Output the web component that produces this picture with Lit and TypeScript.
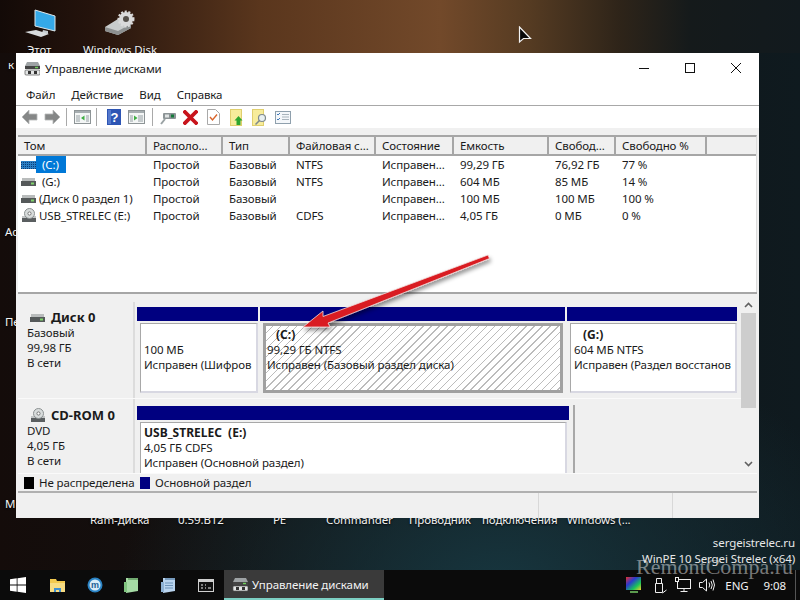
import { LitElement, html, css, svg } from "lit";
import { customElement } from "lit/decorators.js";

const hdd = () => html`<svg class="ico-sm" viewBox="0 0 15 10"><rect x="1" y="1" width="13" height="3" fill="#b9bcbc"/><rect x="0" y="4" width="15" height="5" fill="#55595a"/><rect x="10" y="5.5" width="3" height="2" fill="#7fd36a"/></svg>`;
const hddC = () => html`<svg class="ico-sm" viewBox="0 0 15 10"><defs><pattern id="hz" width="2" height="2" patternUnits="userSpaceOnUse"><rect width="2" height="2" fill="#2c7fc4"/><rect width="1" height="1" fill="#0a3c78"/></pattern></defs><rect x="0" y="1" width="15" height="8" fill="url(#hz)"/></svg>`;
const cd = () => html`<svg class="ico-sm tall" viewBox="0 0 15 15"><rect x="1" y="9" width="14" height="5" fill="#5a5e60"/><rect x="1" y="8" width="14" height="2" fill="#c2c5c6"/><circle cx="8.5" cy="5.5" r="5" fill="#d8dcdc" stroke="#8b9091" stroke-width="1"/><circle cx="8.5" cy="5.5" r="1.6" fill="#fff" stroke="#777"/></svg>`;
const diskTitle = (w = 16) => html`<svg width=${w} height=${w} viewBox="0 0 16 16"><path d="M3 2h11l2 4H1z" fill="#9ea3a5"/><rect x="1" y="6" width="15" height="3" fill="#444"/><rect x="11" y="6.8" width="3" height="1.4" fill="#6fd05c"/><rect x="1" y="10" width="15" height="5" rx="1" fill="#e4e6e6" stroke="#555" stroke-width=".7"/><rect x="4" y="11" width="3" height="3" fill="#333"/><rect x="10" y="11" width="3" height="3" fill="#333"/></svg>`;

const windowFrame = (inner: unknown) => svg`<rect x=".5" y=".5" width="16" height="13" fill="#f4f6f6" stroke="#8d9496"/><rect x="1" y="1" width="15" height="2" fill="#a6adb0"/>${inner}`;

const toolbar: Record<string, unknown> = {
  back: html`<svg width="17" height="16" viewBox="0 0 17 16"><path d="M1 8l7-7V5h8v6H8v4z" fill="#858787" stroke="#b5b7b7" stroke-width=".8"/></svg>`,
  fwd: html`<svg width="17" height="16" viewBox="0 0 17 16"><path d="M16 8L9 1V5H1v6h8v4z" fill="#858787" stroke="#b5b7b7" stroke-width=".8"/></svg>`,
  tree: html`<svg width="17" height="14" viewBox="0 0 17 14">${windowFrame(svg`<path d="M2 5h4v7H2zM12 5h3v7h-3z" fill="#c5cbcd"/><path d="M10.500 5.500v5L7 8z" fill="#3fae44"/>`)}</svg>`,
  help: html`<svg width="14" height="16" viewBox="0 0 14 16"><rect width="14" height="16" fill="#2d55b4"/><rect x="1" y="1" width="3" height="14" fill="#5478cc"/><text x="7.500" y="13" font-size="13" font-weight="700" fill="#fff" text-anchor="middle" font-family="Liberation Sans">?</text></svg>`,
  pane: html`<svg width="17" height="14" viewBox="0 0 17 14">${windowFrame(svg`<path d="M2 5h3v7H2zM10 5h5v7h-5z" fill="#c5cbcd"/><path d="M6 5.500v5L9.500 8z" fill="#3fae44"/>`)}</svg>`,
  connect: html`<svg width="16" height="15" viewBox="0 0 16 15"><rect x="3" y="3" width="13" height="6" rx="1" fill="#8c9496"/><rect x="11" y="4.500" width="3" height="3" fill="#147a3a"/><rect x="5" y="4.500" width="4" height="3" fill="#dfe3e3"/><path d="M5 9L1 14" stroke="#9aa2a4" stroke-width="2"/></svg>`,
  del: html`<svg width="15" height="15" viewBox="0 0 15 15"><path d="M2 2l11 11M13 2L2 13" stroke="#c8141c" stroke-width="3.800" stroke-linecap="square"/></svg>`,
  check: html`<svg width="13" height="16" viewBox="0 0 13 16"><path d="M.5.500h8l4 4v11H.5z" fill="#fff" stroke="#a9a9a9"/><path d="M3 8l2.500 3L10 5.500" fill="none" stroke="#d9652b" stroke-width="1.400"/></svg>`,
  up: html`<svg width="14" height="17" viewBox="0 0 14 17"><rect x=".5" y=".5" width="11" height="16" fill="#f7ec9b" stroke="#e0cf6e"/><path d="M8.500 7l4 4.500H10.500V16h-4v-4.500h-2z" fill="#2ea52e"/></svg>`,
  find: html`<svg width="15" height="17" viewBox="0 0 15 17"><rect x=".5" y=".5" width="11" height="16" fill="#f7ec9b" stroke="#e0cf6e"/><circle cx="10" cy="9" r="3.500" fill="#e8f0f2" stroke="#7f8a8c" stroke-width="1.200"/><path d="M7.500 11.500L3.500 15.500" stroke="#7f8a8c" stroke-width="1.600"/></svg>`,
  list: html`<svg width="16" height="13" viewBox="0 0 16 13"><rect x=".5" y=".5" width="15" height="12" fill="#f4f7fa" stroke="#8fa0ad"/><path d="M2 3l1 1 2-2M2 8l1 1 2-2" fill="none" stroke="#3f78b8"/><path d="M7 3.500h7M7 6h7M7 8.500h7" stroke="#a9b4bc"/></svg>`,
};

const rows = [
  { ic: hddC, name: "(C:)", sel: true, rest: ["Простой", "Базовый", "NTFS", "Исправен...", "99,29 ГБ", "76,92 ГБ", "77 %"] },
  { ic: hdd, name: "(G:)", wide: true, rest: ["Простой", "Базовый", "NTFS", "Исправен...", "604 МБ", "85 МБ", "14 %"] },
  { ic: hdd, name: "(Диск 0 раздел 1)", rest: ["Простой", "Базовый", "", "Исправен...", "100 МБ", "100 МБ", "100 %"] },
  { ic: cd, name: "USB_STRELEC (E:)", rest: ["Простой", "Базовый", "CDFS", "Исправен...", "4,05 ГБ", "0 МБ", "0 %"] },
];

const heads = ["Том", "Располо...", "Тип", "Файловая с...", "Состояние", "Емкость", "Свобод...", "Свободно %", ""];

const deskLabels = [
  { t: "Этот", x: 27, y: 42 }, { t: "Windows Disk", x: 83, y: 42 }, { t: "к", x: 8, y: 57 },
  { t: "Ac", x: 5, y: 224 }, { t: "Пе", x: 5, y: 314 }, { t: "М", x: 5, y: 496 },
  { t: "Ram-диска", x: 90, y: 512 }, { t: "0.59.B12", x: 178, y: 512 }, { t: "PE", x: 273, y: 512 },
  { t: "Commander", x: 326, y: 512 }, { t: "Проводник", x: 409, y: 512 }, { t: "подключения", x: 482, y: 512 }, { t: "Windows (...", x: 567, y: 512 },
];

@customElement("app-root")
export class AppRoot extends LitElement {
  static styles = css`
    :host { display: block; width: 800px; height: 600px; position: relative; overflow: hidden;
      font: 11.5px/15px "Noto Sans", "Open Sans", sans-serif; letter-spacing: -0.1px; color: #1a1a1a;
      background:
        linear-gradient(90deg, #130a07 0, #24130c 90px, #5a361d 260px, #72492a 440px, #553b22 530px, #2e2419 620px, #151a1b 690px, #121a1e 800px) top / 100% 53px no-repeat,
        radial-gradient(ellipse 380px 260px at 500px 590px, #17363f, transparent),
        linear-gradient(90deg, #140c0a, #0f1a1f); }
    .dlabel { position: absolute; color: #f2f2f2; white-space: nowrap; text-shadow: 0 1px 2px #000; }
    .dicon { position: absolute; }
    .cursor { position: absolute; left: 518px; top: 26px; }
    .win { position: absolute; left: 16px; top: 53px; width: 743px; height: 465px; background: #f0f0f0; display: flex; flex-direction: column; }
    .title { height: 30px; background: #fff; display: flex; align-items: center; padding-left: 8px; gap: 5px; flex: none; }
    .title span { flex: 1; }
    .ctl { display: flex; align-items: center; }
    .ctl svg { display: block; width: 46px; height: 12px; }
    .menu { height: 22px; background: #fff; display: flex; align-items: center; gap: 16px; padding-left: 10px; border-bottom: 1px solid #a8a8a8; flex: none; }
    .tools { height: 22px; background: #fff; display: flex; align-items: center; padding-left: 2px; flex: none; }
    .tb { width: 23px; height: 22px; display: flex; align-items: center; justify-content: center; flex: none; }
    .tb svg { display: block; }
    .sep { width: 1px; height: 18px; background: #a9a9a9; flex: none; }
    .s1 { margin: 0 4px 0 2px; }
    .s2 { margin: 0 5px 0 2px; }
    .s3 { margin: 0 3px 0 4px; }
    .strip { height: 7px; flex: none; }
    .frame { margin: 0 2px; flex: none; display: flex; flex-direction: column; }
    .list { height: 155px; background: #fff; border-top: 2px solid #a6a6a6; border-right: 1px solid #ddd; flex: none; }
    .grid { display: grid; grid-template-columns: 129px 76px 67px 86px 78px 95px 67px 91px 1fr; }
    .head { height: 17px; background: #f0f0f0; border-bottom: 2px solid #a6a6a6; }
    .hc { padding-left: 6px; border-right: 2px solid #a6a6a6; line-height: 18px; white-space: nowrap; overflow: hidden; }
    .hc:last-child { border-right: 0; }
    .row { height: 17px; line-height: 17px; }
    .c { padding-left: 6px; white-space: nowrap; overflow: hidden; }
    .c0 { padding-left: 3px; display: flex; align-items: center; }
    .ico-sm { width: 15px; height: 10px; flex: none; margin-right: 3px; display: block; }
    .ico-sm.tall { height: 15px; }
    .sel { background: #0078d7; color: #fff; padding: 0 7px 0 6px; height: 17px; margin-left: -3px; }
    .wide { padding-left: 3px; }
    .split { height: 2px; border-top: 2px solid #a6a6a6; background: #f0f0f0; flex: none; }
    .pane { height: 177px; display: flex; overflow: hidden; flex: none; }
    .vols { width: 723px; padding-top: 6px; flex: none; overflow: hidden; }
    .sb { width: 15px; display: flex; flex-direction: column; align-items: center; justify-content: space-between; position: relative; flex: none; height: 177px; }
    .thumb { position: absolute; left: 0; top: 17px; width: 15px; height: 95px; background: #cdcdcd; }
    .sb svg { display: block; }
    .arrow-u { margin-top: 6px; }
    .arrow-d { margin-bottom: 6px; }
    .disk { display: flex; border-bottom: 1px solid #fafafa; }
    .d0 { height: 96px; }
    .d1 { height: 80px; }
    .info { width: 117px; border-right: 2px solid #dcdcdc; padding: 8px 0 0 9px; box-sizing: border-box; flex: none; }
    .d1 .info { padding-top: 9px; }
    .info-h { display: flex; align-items: center; font-weight: 700; font-size: 13px; letter-spacing: 0; }
    .info-h .ico-sm { margin: 0 6px 0 3px; }
    .parts { display: flex; gap: 2px; padding: 5px 0 0 2px; flex: 1; align-items: flex-start; }
    .part { display: flex; flex-direction: column; flex: none; }
    .p1 { width: 121px; }
    .p2 { width: 305px; }
    .p3 { width: 170px; }
    .p4 { width: 432px; margin-top: 2px; }
    .bar { height: 14px; background: #000080; flex: none; }
    .box { margin: 2px 0 0 3px; height: 70px; box-sizing: border-box; background: #fff; border: 1px solid #a8a8a8; border-right: 2px solid #d8d8e2; border-bottom: 2px solid #d8d8e2; padding: 3px 0 0 3px; white-space: nowrap; overflow: hidden; }
    .p2 .box { margin-right: 2px; border: 3px solid #a0a0a0; padding: 1px 0 0 1px;
      background: repeating-linear-gradient(135deg, #fff 0 4.6px, #bcbcbc 4.6px 5.6px); }
    .p4 .box { height: 60px; padding-top: 2px; border-bottom: 0; margin-right: 2px; }
    .b { font-weight: 700; font-size: 12px; letter-spacing: 0; }
    .ind { padding-left: 9px; }
    .vline { width: 2px; height: 70px; background: #a8a8a8; margin: 1px 0 0 2px; flex: none; }
    .legend { height: 17px; margin: 0 2px; border-top: 1px solid #fafafa; border-bottom: 2px solid #b0b0b0; display: flex; align-items: center; padding-left: 6px; flex: none; }
    .sw { width: 10px; height: 12px; flex: none; margin-right: 5px; }
    .k { background: #000; }
    .n { background: #000080; }
    .lg { margin-right: 6px; width: 95px; white-space: nowrap; }
    .status { flex: 1; display: flex; }
    .st { border-right: 1px solid #d8d8d8; }
    .st1 { width: 522px; }
    .st2 { width: 133px; }
    .arrowbox { position: absolute; left: 0; top: 0; pointer-events: none; }
    .bar-task { position: absolute; left: 0; right: 0; bottom: 0; height: 30px; background: #0b0b0b; display: flex; align-items: center; color: #f2f2f2; }
    .ti { width: 37px; display: flex; justify-content: center; flex: none; }
    .ti svg { display: block; }
    .start { width: 39px; padding-right: 3px; box-sizing: border-box; }
    .active { margin-left: 0; width: 160px; height: 30px; box-sizing: border-box; background: #3a3a3a; border-bottom: 2px solid #7ccfc3; display: flex; align-items: center; gap: 4px; padding-left: 8px; flex: none; }
    .tray { margin-left: auto; display: flex; align-items: center; }
    .tray svg { display: block; }
    .t1 { margin-right: 12px; }
    .t2 { margin-right: 8px; }
    .t3 { margin-right: 8px; }
    .t4 { margin-right: 10px; }
    .eng { margin-right: 15px; }
    .clock { margin-right: 9px; }
    .endline { width: 1px; height: 30px; background: #555; margin-right: 4px; }
    .brand { position: absolute; right: 5px; top: 535px; text-align: right; color: #e8e8e8; line-height: 16px; }
    .mark { position: absolute; left: 636px; top: 553px; font: 22px/28px "Liberation Serif", serif; letter-spacing: 0; color: rgba(255,255,255,.45); white-space: nowrap; }
  `;

  render() {
    return html`
      ${deskLabels.map((l) => html`<div class="dlabel" style="left:${l.x}px;top:${l.y}px">${l.t}</div>`)}
      <svg class="dicon" style="left:24px;top:8px" width="32" height="30" viewBox="0 0 32 30"><path d="M11 2l20 6v15l-20-5z" fill="#35a9e8" stroke="#dfe7ea"/><path d="M19 22l5 1v3l-6-1z" fill="#c7cdd0"/><path d="M1 24l11-2 13 4-8 3z" fill="#d8dcde"/></svg>
      <svg class="dicon" style="left:103px;top:10px" width="34" height="26" viewBox="0 0 34 26"><path d="M2 17l13-8 13 5v4l-13 7-13-4z" fill="#c9cccc"/><path d="M2 17l13 4 13-7v4l-13 7-13-4z" fill="#8d9090"/><circle cx="23" cy="9" r="7" fill="#dadada" stroke="#dadada" stroke-width="3" stroke-dasharray="2 1.500"/><circle cx="23" cy="9" r="3" fill="#55504a"/></svg>
      <svg class="cursor" width="15" height="19" viewBox="0 0 15 19"><path d="M1.500 1v15l4-3.500h7z" fill="#0a0a0a" stroke="#f4f4f4" stroke-width="1.200"/></svg>

      <div class="brand">sergeistrelec.ru<br />WinPE 10 Sergei Strelec (x64)</div>

      <div class="bar-task">
        <div class="ti start"><svg width="16" height="16" viewBox="0 0 16 16" fill="#fff"><path d="M0 2.200l6.700-.9v6.300H0zM7.500 1.200L16 0v7.600H7.500zM0 8.400h6.700v6.300L0 13.800zM7.500 8.400H16V16l-8.500-1.200z"/></svg></div>
        <div class="ti"><svg width="17" height="15" viewBox="0 0 17 15"><path d="M1 1h6l1 2h8v11H1z" fill="#f2c94f"/><rect x="1" y="5" width="15" height="9" fill="#f7dc83"/><path d="M5 14v-4h7v4h-2v-2H7v2z" fill="#3f8fd0"/></svg></div>
        <div class="ti"><svg width="16" height="16" viewBox="0 0 16 16"><circle cx="8" cy="8" r="7.500" fill="#2a83c4"/><circle cx="8" cy="8" r="5.500" fill="#d8ecf8"/><text x="8" y="11" font-size="9" font-weight="700" fill="#1b5f96" text-anchor="middle" font-family="Liberation Sans">m</text></svg></div>
        <div class="ti"><svg width="15" height="16" viewBox="0 0 15 16"><path d="M2 1h12v13l-12 2z" fill="#a5dba5"/><path d="M5 1v2M7 1v2M9 1v2M11 1v2M13 1v2" stroke="#3d7a3d"/><path d="M0 5h3v10H0z" fill="#7fc47f"/></svg></div>
        <div class="ti"><svg width="15" height="16" viewBox="0 0 15 16"><path d="M2 1h12v13l-12 2z" fill="#b9d4ee"/><path d="M5 1v2M7 1v2M9 1v2M11 1v2M13 1v2" stroke="#36658f"/><path d="M4 6h8M4 8.500h8M4 11h8" stroke="#6d93b8"/><path d="M0 5h3v10H0z" fill="#8eb2d4"/></svg></div>
        <div class="ti"><svg width="16" height="13" viewBox="0 0 16 13"><rect x=".5" y=".5" width="15" height="12" fill="#111" stroke="#cfcfcf"/><rect x="1" y="1" width="14" height="2" fill="#cfcfcf"/><path d="M3 6h2M3 9h2M7 6h1M7 9h1M10 9h3" stroke="#eee"/></svg></div>
        <div class="active">${diskTitle()}<span>Управление дисками</span></div>
        <div class="tray">
          <svg class="t1" width="16" height="16" viewBox="0 0 16 16"><defs><linearGradient id="rb" x1="0" x2="1" y1="0" y2="1"><stop offset="0" stop-color="#e8322a"/><stop offset=".35" stop-color="#2b38d0"/><stop offset=".7" stop-color="#18c45a"/><stop offset="1" stop-color="#f2d22a"/></linearGradient></defs><rect width="15" height="13" fill="url(#rb)"/><path d="M4 15h8" stroke="#7c6" stroke-width="1.500"/></svg>
          <svg class="t2" width="13" height="17" viewBox="0 0 13 17" fill="none" stroke="#eee"><path d="M1.500 6.500h7v9h-7zM2.500 6.500v-5h5v5"/><path d="M8.500 16l4-3"/></svg>
          <svg class="t3" width="16" height="16" viewBox="0 0 16 16" fill="none" stroke="#eee"><rect x="2.500" y="2.500" width="13" height="9"/><path d="M9 11.500v3M5.500 14.500h7"/><rect x=".5" y=".5" width="3" height="4" fill="#0b0b0b"/></svg>
          <svg class="t4" width="16" height="14" viewBox="0 0 16 14" fill="none" stroke="#eee"><path d="M.5 4.500h3l4-3.500v12l-4-3.500h-3z"/><path d="M10 4.500q1.500 2.500 0 5M12 3q2.500 4 0 8M14 1.500q3 5.500 0 11"/></svg>
          <span class="eng">ENG</span>
          <span class="clock">9:08</span>
          <div class="endline"></div>
        </div>
      </div>
      <div class="mark">RemontCompa.ru</div>

      <div class="win">
        <div class="title">
          ${diskTitle()}<span>Управление дисками</span>
          <div class="ctl">
            <svg viewBox="0 0 46 12"><path d="M18 6.500h10" stroke="#111"/></svg>
            <svg viewBox="0 0 46 12"><rect x="18.500" y="1.500" width="9" height="9" fill="none" stroke="#111"/></svg>
            <svg viewBox="0 0 46 12"><path d="M18 1l10 10M28 1L18 11" stroke="#111" fill="none"/></svg>
          </div>
        </div>
        <div class="menu"><span>Файл</span><span>Действие</span><span>Вид</span><span>Справка</span></div>
        <div class="tools">
          <div class="tb">${toolbar.back}</div><div class="tb">${toolbar.fwd}</div>
          <div class="sep s1"></div>
          <div class="tb">${toolbar.tree}</div>
          <div class="sep s2"></div>
          <div class="tb">${toolbar.help}</div><div class="tb">${toolbar.pane}</div>
          <div class="sep s3"></div>
          <div class="tb">${toolbar.connect}</div><div class="tb">${toolbar.del}</div><div class="tb">${toolbar.check}</div><div class="tb">${toolbar.up}</div><div class="tb">${toolbar.find}</div><div class="tb">${toolbar.list}</div>
        </div>
        <div class="strip"></div>
        <div class="frame">
          <div class="list">
            <div class="grid head">${heads.map((h) => html`<div class="hc">${h}</div>`)}</div>
            ${rows.map((r) => html`<div class="grid row">
              <div class="c c0">${r.ic()}<span class=${r.sel ? "sel" : r.wide ? "wide" : ""}>${r.name}</span></div>
              ${r.rest.map((v) => html`<div class="c">${v}</div>`)}
            </div>`)}
          </div>
          <div class="split"></div>
          <div class="pane">
            <div class="vols">
              <div class="disk d0">
                <div class="info">
                  <div class="info-h">${hdd()}Диск 0</div>
                  <div>Базовый</div><div>99,98 ГБ</div><div>В сети</div>
                </div>
                <div class="parts">
                  <div class="part p1"><div class="bar"></div><div class="box"><br />100 МБ<br />Исправен (Шифров</div></div>
                  <div class="part p2"><div class="bar"></div><div class="box"><div class="b ind">(C:)</div>99,29 ГБ NTFS<br />Исправен (Базовый раздел диска)</div></div>
                  <div class="part p3"><div class="bar"></div><div class="box"><div class="b ind">(G:)</div>604 МБ NTFS<br />Исправен (Раздел восстанов</div></div>
                </div>
              </div>
              <div class="disk d1">
                <div class="info">
                  <div class="info-h">${cd()}CD-ROM 0</div>
                  <div>DVD</div><div>4,05 ГБ</div><div>В сети</div>
                </div>
                <div class="parts">
                  <div class="part p4"><div class="bar"></div><div class="box"><div class="b">USB_STRELEC&nbsp;&nbsp;(E:)</div>4,05 ГБ CDFS<br />Исправен (Основной раздел)</div></div>
                  <div class="vline"></div>
                </div>
              </div>
            </div>
            <div class="sb">
              <div class="thumb"></div>
              <svg class="arrow-u" width="9" height="6" viewBox="0 0 9 6"><path d="M1 5l3.500-3.500L8 5" fill="none" stroke="#606060" stroke-width="1.600"/></svg>
              <svg class="arrow-d" width="9" height="6" viewBox="0 0 9 6"><path d="M1 1l3.500 3.500L8 1" fill="none" stroke="#606060" stroke-width="1.600"/></svg>
            </div>
          </div>
        </div>
        <div class="legend"><div class="sw k"></div><div class="lg">Не распределена</div><div class="sw n"></div><div class="lg">Основной раздел</div></div>
        <div class="status"><div class="st st1"></div><div class="st st2"></div></div>
      </div>

      <svg class="arrowbox" width="800" height="600" viewBox="0 0 800 600">
        <defs><filter id="ds" x="-10%" y="-20%" width="120%" height="150%"><feDropShadow dx="1" dy="3" stdDeviation="2" flood-color="#000" flood-opacity=".45"/></filter></defs>
        <path d="M303 327L323 311L323 316.500L488 255L489.500 258.500L328 323L330 327Z" fill="#d91c20" stroke="#f3dcdc" stroke-width=".8" filter="url(#ds)"/>
      </svg>
    `;
  }
}
